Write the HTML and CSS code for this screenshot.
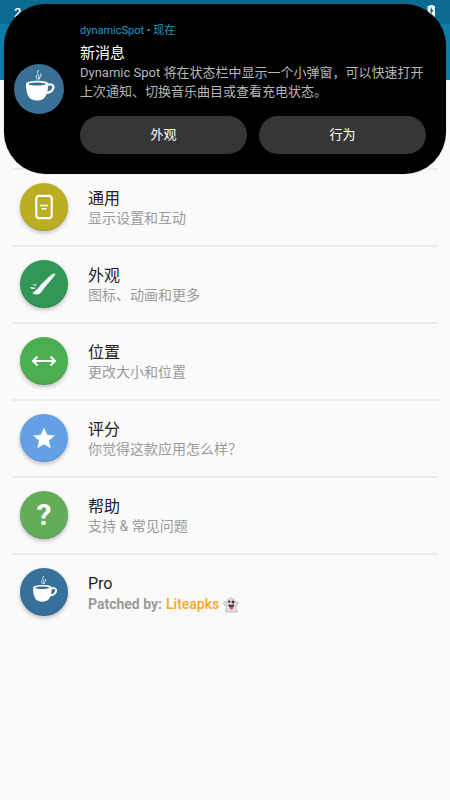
FILE: index.html
```html
<!DOCTYPE html>
<html lang="zh-CN">
<head>
<meta charset="utf-8">
<title>dynamicSpot</title>
<link rel="stylesheet" href="styles.css">
</head>
<body>
<svg width="0" height="0" class="symbols" aria-hidden="true">
  <symbol id="cup" viewBox="0 0 50 50">
    <path fill="#fff" fill-rule="evenodd" d="M12 20C12 15.800 34 15.800 34 19.500C39.500 18.200 41.800 22 40 25.500C38.600 28.400 35.800 30 32.600 30C31 34 28.500 36.500 23 36.500C15 36.500 12 31 12 20ZM14 20C17 22 29 22 32 20C29 18 17 18 14 20ZM34 22C34 24 33.800 26 33.300 27.600C37 27 38.700 24.500 38.200 22.500C37.700 21 35.500 21.200 34 22Z"/>
    <path d="M25 6C20.500 10 27.500 11 24 15.500M26.500 9.500C28 12 25.500 13 25 15.500M22.500 11C21.500 13 23 14 23.200 15.500" fill="none" stroke="#fff" stroke-width=".9"/>
  </symbol>
</svg>
<header>
  <div class="status"><span>2</span>
    <svg class="battery" width="9" height="12" viewBox="0 0 9 12"><path fill="#e8f7fc" d="M2.500 0h4v1H8v11H.5V1h2z"/><path fill="#116b91" d="M5 2L2.500 6.500h1.600L3.500 10L6.500 5H5z"/></svg>
  </div>
</header>
<main>
  <section class="row"><div class="icon olive"><svg viewBox="0 0 48 48"><rect x="16.300" y="12.800" width="15.400" height="22.400" rx="3" fill="none" stroke="#fff" stroke-width="2.200"/><path d="M20 22.600h8M21.500 25.800h5" stroke="#fff" stroke-width="1.500"/></svg></div><div class="copy"><h2>通用</h2><p>显示设置和互动</p></div></section>
  <section class="row"><div class="icon green"><svg viewBox="0 0 48 48"><path fill="#fff" d="M34.800 13.600C33 12.600 30 15.500 20.500 25C19 27.500 17 29.500 14.500 31.500C13 32.200 12 33.300 13.700 34C17 34.800 20 34.800 22 31.200C25.500 26 31 20.500 34.800 15.500C35.300 14.700 35.300 14 34.800 13.600Z"/><path fill="#fff" d="M12.500 24Q15 25 17 24Q16.500 25.500 15 25.700Q13 25.500 12.500 24ZM10 27.300Q13.500 27 16 28Q13.500 29.500 11.500 28.700Z"/></svg></div><div class="copy"><h2>外观</h2><p>图标、动画和更多</p></div></section>
  <section class="row"><div class="icon leaf"><svg viewBox="0 0 48 48"><path d="M13 24h22M17.500 19.500L13 24l4.500 4.500M30.500 19.500L35 24l-4.500 4.500" fill="none" stroke="#fff" stroke-width="2"/></svg></div><div class="copy"><h2>位置</h2><p>更改大小和位置</p></div></section>
  <section class="row"><div class="icon blue"><svg viewBox="0 0 48 48"><path fill="#fff" stroke="#fff" stroke-width=".6" stroke-linejoin="round" d="M24 14.300L26.900 21.100L34.100 21.700L28.700 26.600L30.300 33.800L24 29.900L17.700 33.800L19.300 26.600L13.900 21.700L21.100 21.100Z"/></svg></div><div class="copy"><h2>评分</h2><p>你觉得这款应用怎么样？</p></div></section>
  <section class="row"><div class="icon lime"><span class="question">?</span></div><div class="copy"><h2>帮助</h2><p>支持 &amp; 常见问题</p></div></section>
  <section class="row"><div class="icon steel"><svg class="small-cup" viewBox="0 0 50 50"><use href="#cup"/></svg></div><div class="copy"><h2>Pro</h2><p class="patched">Patched by: <span>Liteapks</span>
    <svg class="ghost" width="16" height="16" viewBox="0 0 16 16"><path fill="#dedede" stroke="#a5a5a5" stroke-width=".6" d="M3.500 6C3.500-.8 12.500-.8 12.500 6L14 4.500Q15.500 5 15.200 7Q14.500 9 12.500 9Q12.500 13 15 14.500Q12.500 16 10.500 14.800Q8 16 6 14.700Q3.500 15.500 2 14Q4 12.500 3.500 9Q1 9 .6 6.500Q1 4.500 2 4.500Z"/><circle cx="6.200" cy="4.600" r="1.200" fill="#333"/><circle cx="10" cy="4.900" r="1.500" fill="#333"/><path fill="#333" d="M5.200 7.200Q8 8.500 11.200 7.200Q11 11 8.200 11Q5.800 10.800 5.200 7.200Z"/><path fill="#e43b62" d="M7 9.500h3v2Q8.500 13.500 7 11.500Z"/></svg></p></div></section>
</main>
<aside class="popup">
  <div class="avatar"><svg viewBox="0 0 50 50"><use href="#cup"/></svg></div>
  <div class="message">
    <div class="source">dynamicSpot • 现在</div>
    <h1>新消息</h1>
    <p>Dynamic Spot 将在状态栏中显示一个小弹窗，可以快速打开<br>上次通知、切换音乐曲目或查看充电状态。</p>
    <div class="actions"><button>外观</button><button>行为</button></div>
  </div>
</aside>
</body>
</html>
```
FILE: styles.css
```css
* { box-sizing: border-box; }
body {
  margin: 0;
  height: 800px;
  overflow: hidden;
  position: relative;
  background: #fafafa;
  font-family: Roboto, "Noto Sans CJK SC", sans-serif;
}
.symbols { position: absolute; }
h1, h2, p { margin: 0; font-weight: 400; white-space: nowrap; }
header { height: 80px; background: #0e7dab; }
.status {
  height: 24px;
  padding: 5px 14px 0;
  display: flex;
  justify-content: space-between;
  background: #0c6a91;
  color: #fff;
  font-size: 13px;
  font-weight: 500;
  line-height: 15px;
}
main { margin: 0 12px; padding-top: 88px; }
.row {
  height: 77px;
  padding: 0 0 2px 8px;
  display: flex;
  align-items: center;
  border-top: 2px solid #ebebeb;
}
.icon {
  width: 48px;
  height: 48px;
  margin-right: 20px;
  border-radius: 50%;
  display: flex;
  align-items: center;
  justify-content: center;
  box-shadow: 0 2px 4px rgba(0, 0, 0, .25), inset 0 -1px 1px rgba(0, 0, 0, .12);
}
.icon svg { width: 48px; height: 48px; }
.icon .small-cup { width: 42px; height: 42px; }
.olive { background: #bcae22; }
.green { background: #309756; }
.leaf { background: #4bae4f; }
.blue { background: #64a0e6; }
.lime { background: #62ac5a; }
.steel { background: #37709a; }
.question { color: #fff; font-size: 30px; font-weight: 700; line-height: 48px; }
.copy { padding-top: 3px; }
.copy h2 { font-size: 16px; line-height: 20px; color: #222; }
.copy p { font-size: 14px; line-height: 19px; color: #9a9a9a; }
.copy .patched { padding-top: 1px; margin-bottom: -1px; display: flex; font-weight: 700; }
.patched span { margin: 0 4px; color: #f5a52d; font-weight: 500; }
.ghost { margin-top: 2px; }
.popup {
  position: absolute;
  left: 4px;
  top: 4px;
  width: 442px;
  height: 170px;
  padding: 0 20px 0 10px;
  display: flex;
  background: #000;
  border-radius: 42px;
  box-shadow: 0 0 1px rgba(0, 0, 0, .5);
}
.avatar {
  width: 50px;
  height: 50px;
  margin: 60px 16px 0 0;
  flex: none;
  border-radius: 50%;
  background: #3b7096;
}
.avatar svg { display: block; width: 50px; height: 50px; }
.message { flex: 1; padding-top: 18px; }
.source { font-size: 11px; line-height: 17px; color: #239bcd; }
h1 { margin-top: 4px; font-size: 15px; line-height: 20px; color: #fff; }
.message p { font-size: 13px; line-height: 19px; color: #b7b7b7; }
.actions { margin-top: 15px; display: flex; gap: 12px; }
button {
  flex: 1;
  height: 38px;
  padding: 0;
  border: 0;
  border-radius: 19px;
  background: #363636;
  color: #fff;
  font: 400 13px/38px Roboto, "Noto Sans CJK SC", sans-serif;
}
```
